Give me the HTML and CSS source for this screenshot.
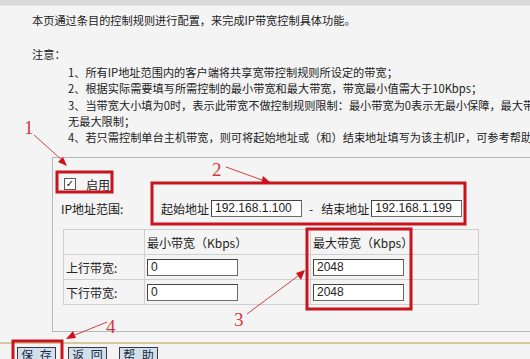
FILE: index.html
```html
<!DOCTYPE html>
<html lang="zh-CN">
<head>
  <meta charset="UTF-8" />
  <title>IP带宽控制</title>
  <link rel="stylesheet" href="styles.css">
</head>
<body>
  <div class="topbar"></div>

  <p class="intro">本页通过条目的控制规则进行配置，来完成IP带宽控制具体功能。</p>

  <p class="note-title">注意：</p>
  <ul class="notes">
    <li>1、所有IP地址范围内的客户端将共享宽带控制规则所设定的带宽；</li>
    <li>2、根据实际需要填写所需控制的最小带宽和最大带宽，带宽最小值需大于10Kbps；</li>
    <li>3、当带宽大小填为0时，表示此带宽不做控制规则限制：最小带宽为0表示无最小保障，最大带宽为0表示</li>
    <li>无最大限制；</li>
    <li>4、若只需控制单台主机带宽，则可将起始地址或（和）结束地址填写为该主机IP，可参考帮助示例。</li>
  </ul>

  <div class="panel">
    <label class="enable-row">
      <span class="check">✓</span>
      <span>启用</span>
    </label>

    <div class="ip-row">
      <span class="ip-label">IP地址范围:</span>
      <span>起始地址</span>
      <input type="text" class="field" value="192.168.1.100">
      <span class="dash">-</span>
      <span>结束地址</span>
      <input type="text" class="field" value="192.168.1.199">
    </div>

    <table class="bw-table">
      <tr>
        <td class="col-label"></td>
        <td class="col-min">最小带宽（Kbps）</td>
        <td class="col-max">最大带宽（Kbps）</td>
      </tr>
      <tr>
        <td>上行带宽:</td>
        <td><input type="text" class="field" value="0"></td>
        <td><input type="text" class="field" value="2048"></td>
      </tr>
      <tr>
        <td>下行带宽:</td>
        <td><input type="text" class="field" value="0"></td>
        <td><input type="text" class="field" value="2048"></td>
      </tr>
    </table>
  </div>

  <div class="buttons">
    <button class="btn">保 存</button>
    <button class="btn">返 回</button>
    <button class="btn">帮 助</button>
  </div>

  <!-- 标注层 -->
  <svg class="marks" width="530" height="359" viewBox="0 0 530 359">
    <g fill="none" stroke="#c8141c" stroke-width="3">
      <rect x="57" y="172" width="55" height="20" />
      <rect x="152" y="183" width="313" height="41" />
      <rect x="307" y="229" width="104" height="80" />
      <rect x="13" y="341" width="49" height="22" />
    </g>
    <g stroke="#c8444a" stroke-width="1">
      <line x1="34" y1="135" x2="63" y2="161" />
      <line x1="226" y1="167" x2="262" y2="180" />
      <line x1="247" y1="314" x2="298" y2="276" />
      <line x1="107" y1="322" x2="75" y2="335" />
    </g>
    <g fill="#d0101a">
      <polygon points="67,166 58,162 63,157" />
      <polygon points="271,183 261,184 263,176" />
      <polygon points="305,270 301,280 296,273" />
      <polygon points="66,339 73,331 76,338" />
    </g>
    <g class="num">
      <text x="24" y="134">1</text>
      <text x="212" y="176">2</text>
      <text x="234" y="326">3</text>
      <text x="106" y="333">4</text>
    </g>
  </svg>
</body>
</html>
```

FILE: styles.css
```css
body {
  margin: 0;
  width: 530px;
  height: 359px;
  overflow: hidden;
  position: relative;
  background-color: #f4f4f4;
  font-family: "Noto Sans CJK SC", "Liberation Sans", sans-serif;
  font-size: 12px;
  color: #222;
  white-space: nowrap;
}
p, ul {
  margin: 0;
}
.topbar {
  height: 5px;
  background-color: #d9d9d9;
  border-bottom: 1px solid #e6e6e6;
}
.intro {
  margin-top: 6px;
  padding-left: 32px;
  line-height: 16px;
  font-size: 11.2px;
}
.note-title {
  margin-top: 18px;
  padding-left: 32px;
  line-height: 16px;
  font-size: 11.2px;
}
.notes {
  list-style: none;
  padding-left: 68px;
  margin-top: 2px;
  font-size: 11.2px;
}
.notes li {
  line-height: 16.3px;
}
.panel {
  margin: 12px 0 0 52px;
  height: 175px;
  box-sizing: border-box;
  border: 1px solid #b8b8b8;
  border-right: none;
  padding: 18px 0 0 8px;
}
.enable-row {
  display: flex;
  align-items: center;
  height: 16px;
}
.check {
  width: 12px;
  height: 12px;
  box-sizing: border-box;
  margin: 0 10px 0 3px;
  border: 1px solid #5a5a5a;
  background: #ffffff;
  font-family: "DejaVu Sans", sans-serif;
  font-size: 10px;
  line-height: 10px;
  text-align: center;
  color: #111;
}
.ip-row {
  display: flex;
  align-items: center;
  height: 18px;
  margin-top: 7px;
}
.ip-label {
  width: 100px;
}
.ip-row .field {
  margin-left: 2px;
}
.dash {
  margin: 0 8px 0 7px;
}
.field {
  width: 91px;
  height: 17px;
  box-sizing: border-box;
  border: 1px solid #6a6a6a;
  border-top-color: #444;
  border-left-color: #444;
  background: #ffffff;
  font-family: "Liberation Sans", sans-serif;
  font-size: 12px;
  padding: 0 3px;
  color: #222;
}
.bw-table {
  margin: 12px 0 0 2px;
  border-collapse: collapse;
  width: 416px;
  border: 1px solid #c4c4c4;
}
.bw-table td {
  height: 24px;
  border: 1px solid #cfcfcf;
  padding: 0 0 0 2px;
}
.col-label {
  width: 78px;
}
.col-min {
  width: 163px;
}
.bw-table .field {
  display: block;
}
.buttons {
  margin-top: 10px;
  border-top: 2px solid #d6c7a1;
  padding: 3px 0 0 17px;
  display: flex;
  gap: 12px;
}
.btn {
  width: 39px;
  height: 16px;
  padding: 0 0 0 2px;
  font-family: "Noto Sans CJK SC", sans-serif;
  font-size: 12px;
  line-height: 14px;
  letter-spacing: 2px;
  color: #1a2a40;
  background-color: #d2e0ee;
  border: 1px solid #3a3a3a;
}
.marks {
  position: absolute;
  left: 0;
  top: 0;
}
.num text {
  font-family: "Liberation Serif", serif;
  font-size: 19px;
  fill: #d03a3a;
}
```
